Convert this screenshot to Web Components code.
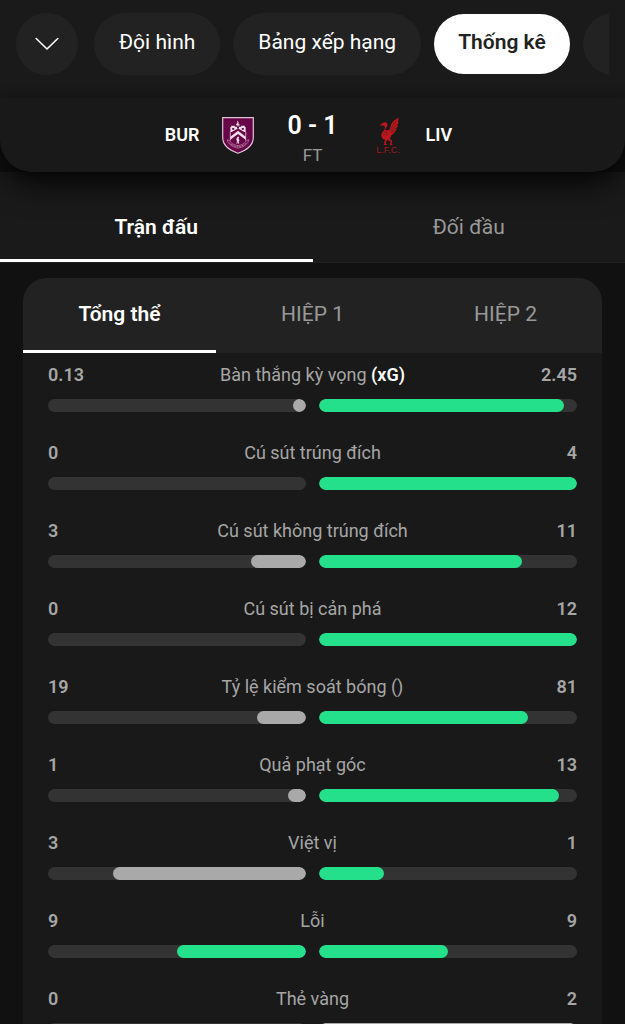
<!DOCTYPE html>
<html lang="vi">
<head>
<meta charset="utf-8">
<meta name="viewport" content="width=device-width, initial-scale=1">
<title>BUR 0 - 1 LIV</title>
<style>
  html {
    background: #111;
    scrollbar-width: none;
  }

  body {
    margin: 0;
    color: #fff;
    font-family: Roboto, "Noto Sans", sans-serif;
  }
</style>
</head>
<body>
<match-page></match-page>

<script>
class NavChip extends HTMLElement {
  constructor() {
    super();
    const root = this.attachShadow({ mode: 'open' });
    root.innerHTML = `
      <style>
        :host { display: block; flex: none; }
        button {
          display: flex;
          align-items: center;
          justify-content: center;
          height: 62px;
          min-width: 62px;
          padding: 0 25px 4px;
          border: 0;
          border-radius: 32px;
          background: #222;
          color: #fff;
          font: 400 21px/28px Roboto, "Noto Sans", sans-serif;
          white-space: nowrap;
          cursor: pointer;
        }
        :host([round]) button { padding: 0; }
        :host([selected]) button {
          height: 60px;
          padding: 0 24px 4px;
          background: #fff;
          color: #222;
          font-weight: 600;
        }
      </style>
      <button type="button"><slot></slot></button>
    `;
    const button = root.querySelector('button');
    if (this.hasAttribute('label')) button.setAttribute('aria-label', this.getAttribute('label'));
    if (this.hasAttribute('selected')) button.setAttribute('aria-current', 'page');
  }
}

class TopNav extends HTMLElement {
  constructor() {
    super();
    this.attachShadow({ mode: 'open' }).innerHTML = `
      <style>
        :host {
          display: flex;
          gap: 16px;
          padding: 13px 16px 23px;
          background: #1a1a1a;
        }
        nav {
          display: flex;
          align-items: center;
          gap: 13px;
          flex: 1;
          min-width: 0;
          overflow: hidden;
        }
        svg { display: block; }
      </style>
      <nav-chip round label="Đóng">
        <svg width="24" height="14" viewBox="0 0 24 14" fill="none" stroke="#fff" stroke-width="1.6" stroke-linecap="round" stroke-linejoin="round">
          <path d="M1.2 1.500 L12 12 L22.8 1.500"/>
        </svg>
      </nav-chip>
      <nav><slot></slot></nav>
    `;
  }
}

class BurnleyCrest extends HTMLElement {
  constructor() {
    super();
    this.attachShadow({ mode: 'open' }).innerHTML = `
      <style>
        :host { display: block; }
        svg { display: block; }
      </style>
      <svg width="32" height="37" viewBox="0 0 32 37" aria-hidden="true">
        <path d="M.7.7h30.6v19.8c0 8-5.500 12.300-15.300 15.700C6.200 32.800.7 28.500.7 20.500z" fill="#670548" stroke="#e3c3d8" stroke-width="1.2"/>
        <g fill="#ecdce7">
          <path d="M14.600 8.600l-.6-1.500 1.400-1.100-.2-2.400 1.500 2-.3 1.100 1.400 1-.6 1z"/>
          <path d="M9.200 8.800h3.600v1h6.400v-1h3.600v1.300h.9v5h-1.400L16 11.400l-6.300 3.700H8.300v-5h.9z"/>
          <path d="M8.300 19.800L16 13.700l7.700 6.100v3L16 16.900l-7.700 5.900z"/>
          <path d="M15.200 20.200l1.200-.8.7 1.200-.5 1.300 1 1.300-.9 1 .5 2.600h-.8l-.5-2-.6 2h-.8l.5-3.200-.8-1.200z"/>
        </g>
        <path d="M10.200 10.900h2v1.900h-2zM15 9.900h2v1.700h-2zM19.800 10.900h2v1.900h-2z" fill="#670548"/>
        <path d="M8.300 15v8.500M23.700 15v8.500" stroke="#ecdce7" stroke-width=".7"/>
        <path d="M5.300 22.600c.4 4 4.500 7.500 10.700 8.500 6.200-1 10.300-4.500 10.700-8.500M5.300 22.600l2.500 1.200c1 2.400 4.200 4.200 8.200 4.900 4-.7 7.200-2.500 8.200-4.900l2.500-1.200" fill="none" stroke="#b9799f" stroke-width=".8"/>
        <path d="M7.500 26c2.500 2.300 5.300 3.300 8.500 3.900 3.200-.6 6-1.600 8.500-3.900" fill="none" stroke="#c792b3" stroke-width="1" stroke-dasharray="1 .7"/>
      </svg>
    `;
  }
}

class LiverpoolCrest extends HTMLElement {
  constructor() {
    super();
    this.attachShadow({ mode: 'open' }).innerHTML = `
      <style>
        :host { display: block; }
        svg { display: block; }
        text { font: 400 9px "Liberation Sans", sans-serif; fill: #a8171d; }
      </style>
      <svg width="32" height="37" viewBox="0 0 32 37" fill="#bd171e" role="img" aria-label="L.F.C.">
        <path d="M7.600 8.300l3.300-2.500c1.500-1.100 3.500-.8 4.300.6.700 1.200.3 2.400-.6 3.500-.8 1.100-1.400 1.900-1.300 2.800 1.500 1.200 3.300.7 4.200-.5 1.300-1.900 1-4.700 2.900-7 1.500-1.700 3.500-2.800 6.300-4.600-.1 1.700-.4 3-1.100 4.200l.9-.3c-.1 1.700-.6 2.900-1.500 4l.9-.3c-.3 1.700-1 2.900-2 3.900l.8-.1c-.6 1.500-1.500 2.600-2.700 3.200l.7.100c-.9 1.400-1.900 2.100-3.200 2.600-.5 1.700-1.100 2.900-2 4l2.800 1.700-.7 3.400 1.500 1.100h-3.300l.9-3.800-3.500-1.200-1.600 2.200 1.300 2.800h-3.800l1.500-1-.5-1.800 1-2.600c-2.800-.7-4.200-2.700-3.700-5.400.3-1.500 1.300-2.800 2.500-4.100.9-1 1.100-2 .9-3.500-.2-.9-.8-1.200-1.400-.9z"/>
        <path d="M17.900 13.600c2.500-2.800 2.300-6.300 6.300-9.600M19 14.600c2.300-2.200 3.200-5.200 5.800-7.400M19.800 15.600c1.900-1.500 2.600-3.500 4.400-5M11.600 14.600c1.300 1 3.100 1.300 4.600.8M11.200 17c1.400.9 3 1.100 4.500.7" fill="none" stroke="#1a1a1a" stroke-width=".4"/>
        <text x="16" y="36" text-anchor="middle">L.F.C.</text>
      </svg>
    `;
  }
}

class ScoreHeader extends HTMLElement {
  constructor() {
    super();
    this.attachShadow({ mode: 'open' }).innerHTML = `
      <style>
        :host {
          display: grid;
          grid-template-columns: 1fr 118px 1fr;
          align-items: center;
          position: relative;
          z-index: 1;
          height: 74px;
          border-radius: 0 0 32px 32px;
          background: #191919;
          box-shadow: 0 0 14px rgba(0, 0, 0, .3), 0 18px 32px -8px rgba(0, 0, 0, .85);
        }
        .team {
          display: flex;
          align-items: center;
          gap: 22px;
          font: 600 18px/24px Roboto, sans-serif;
        }
        .home { justify-content: flex-end; }
        .middle { padding-top: 9px; text-align: center; }
        .score { font: 600 25px/30px Roboto, sans-serif; }
        .status { font-size: 17px; line-height: 28px; color: #9a9a9a; }
      </style>
      <div class="team home"><slot name="home"></slot></div>
      <div class="middle">
        <div class="score"><slot name="score"></slot></div>
        <div class="status"><slot name="status"></slot></div>
      </div>
      <div class="team"><slot name="away"></slot></div>
    `;
  }
}

class TabBar extends HTMLElement {
  constructor() {
    super();
    this.root = this.attachShadow({ mode: 'open' });
  }

  connectedCallback() {
    const tabs = this.getAttribute('tabs').split('|');
    this.root.innerHTML = `
      <style>
        :host {
          display: flex;
          height: 90px;
          background: #1a1a1a;
          border-bottom: 1px solid #222;
        }
        :host([inner]) {
          height: 75px;
          background: #222;
          border-bottom: 0;
        }
        button {
          flex: 1;
          padding: 23px 0 0;
          border: 0;
          border-bottom: 3px solid transparent;
          background: none;
          color: #999;
          font: 400 21px/28px Roboto, "Noto Sans", sans-serif;
          cursor: pointer;
        }
        :host([inner]) button { padding: 0; }
        button[aria-selected="true"] {
          border-color: #fff;
          color: #fff;
          font-weight: 600;
        }
      </style>
      ${tabs.map((t, i) => `<button type="button" role="tab" aria-selected="${i === 0}">${t}</button>`).join('')}
    `;
    this.setAttribute('role', 'tablist');
    const buttons = this.root.querySelectorAll('button');
    buttons.forEach(b => b.addEventListener('click', () => {
      buttons.forEach(o => o.setAttribute('aria-selected', o === b));
    }));
  }
}

class StatRow extends HTMLElement {
  constructor() {
    super();
    this.root = this.attachShadow({ mode: 'open' });
  }

  connectedCallback() {
    const home = +this.getAttribute('home');
    const away = +this.getAttribute('away');
    const lowWins = this.hasAttribute('low-wins');
    const total = home + away;

    // the better side is green, a tie makes both green
    const homeBest = lowWins ? home <= away : home >= away;
    const awayBest = lowWins ? away <= home : away >= home;

    this.root.innerHTML = `
      <style>
        :host { display: block; }
        .texts {
          display: grid;
          grid-template-columns: 1fr auto 1fr;
          margin-bottom: 12px;
          color: #a6a6a6;
          font-size: 18px;
          line-height: 24px;
        }
        .value { font-weight: 600; }
        .value:last-child { text-align: right; }
        .bars { display: grid; grid-template-columns: 1fr 1fr; gap: 13px; }
        .track {
          display: flex;
          height: 13px;
          border-radius: 7px;
          background: #333;
          overflow: hidden;
        }
        .track:first-child { justify-content: flex-end; }
        .fill { border-radius: 7px; background: #a9a9a9; }
        .best { background: #24e08b; }
        ::slotted(b) { color: #fff; font-weight: 600; }
      </style>
      <div class="texts">
        <span class="value">${this.getAttribute('home')}</span>
        <span><slot></slot></span>
        <span class="value">${this.getAttribute('away')}</span>
      </div>
      <div class="bars">
        <div class="track"><div class="fill ${homeBest ? 'best' : ''}" style="width: ${home / total * 100}%"></div></div>
        <div class="track"><div class="fill ${awayBest ? 'best' : ''}" style="width: ${away / total * 100}%"></div></div>
      </div>
    `;
  }
}

class StatsCard extends HTMLElement {
  constructor() {
    super();
    this.attachShadow({ mode: 'open' }).innerHTML = `
      <style>
        :host {
          display: block;
          margin: 15px 23px 0;
          border-radius: 24px 24px 0 0;
          background: #191919;
          overflow: hidden;
        }
        .rows {
          display: flex;
          flex-direction: column;
          gap: 29px;
          padding: 10px 25px 30px;
        }
      </style>
      <slot name="tabs"></slot>
      <div class="rows"><slot></slot></div>
    `;
  }
}

class MatchPage extends HTMLElement {
  constructor() {
    super();
    this.attachShadow({ mode: 'open' }).innerHTML = `
      <style>
        :host { display: block; }
      </style>
      <top-nav>
        <nav-chip>Đội hình</nav-chip>
        <nav-chip>Bảng xếp hạng</nav-chip>
        <nav-chip selected>Thống kê</nav-chip>
        <nav-chip label="Thêm"></nav-chip>
      </top-nav>
      <score-header>
        <span slot="home">BUR</span>
        <burnley-crest slot="home"></burnley-crest>
        <span slot="score">0 - 1</span>
        <span slot="status">FT</span>
        <liverpool-crest slot="away"></liverpool-crest>
        <span slot="away">LIV</span>
      </score-header>
      <tab-bar tabs="Trận đấu|Đối đầu"></tab-bar>
      <stats-card>
        <tab-bar slot="tabs" inner tabs="Tổng thể|HIỆP 1|HIỆP 2"></tab-bar>
        <stat-row home="0.13" away="2.45">Bàn thắng kỳ vọng <b>(xG)</b></stat-row>
        <stat-row home="0" away="4">Cú sút trúng đích</stat-row>
        <stat-row home="3" away="11">Cú sút không trúng đích</stat-row>
        <stat-row home="0" away="12">Cú sút bị cản phá</stat-row>
        <stat-row home="19" away="81">Tỷ lệ kiểm soát bóng ()</stat-row>
        <stat-row home="1" away="13">Quả phạt góc</stat-row>
        <stat-row home="3" away="1" low-wins>Việt vị</stat-row>
        <stat-row home="9" away="9" low-wins>Lỗi</stat-row>
        <stat-row home="0" away="2" low-wins>Thẻ vàng</stat-row>
      </stats-card>
    `;
  }
}

customElements.define('nav-chip', NavChip);
customElements.define('top-nav', TopNav);
customElements.define('burnley-crest', BurnleyCrest);
customElements.define('liverpool-crest', LiverpoolCrest);
customElements.define('score-header', ScoreHeader);
customElements.define('tab-bar', TabBar);
customElements.define('stat-row', StatRow);
customElements.define('stats-card', StatsCard);
customElements.define('match-page', MatchPage);
</script>
</body>
</html>
